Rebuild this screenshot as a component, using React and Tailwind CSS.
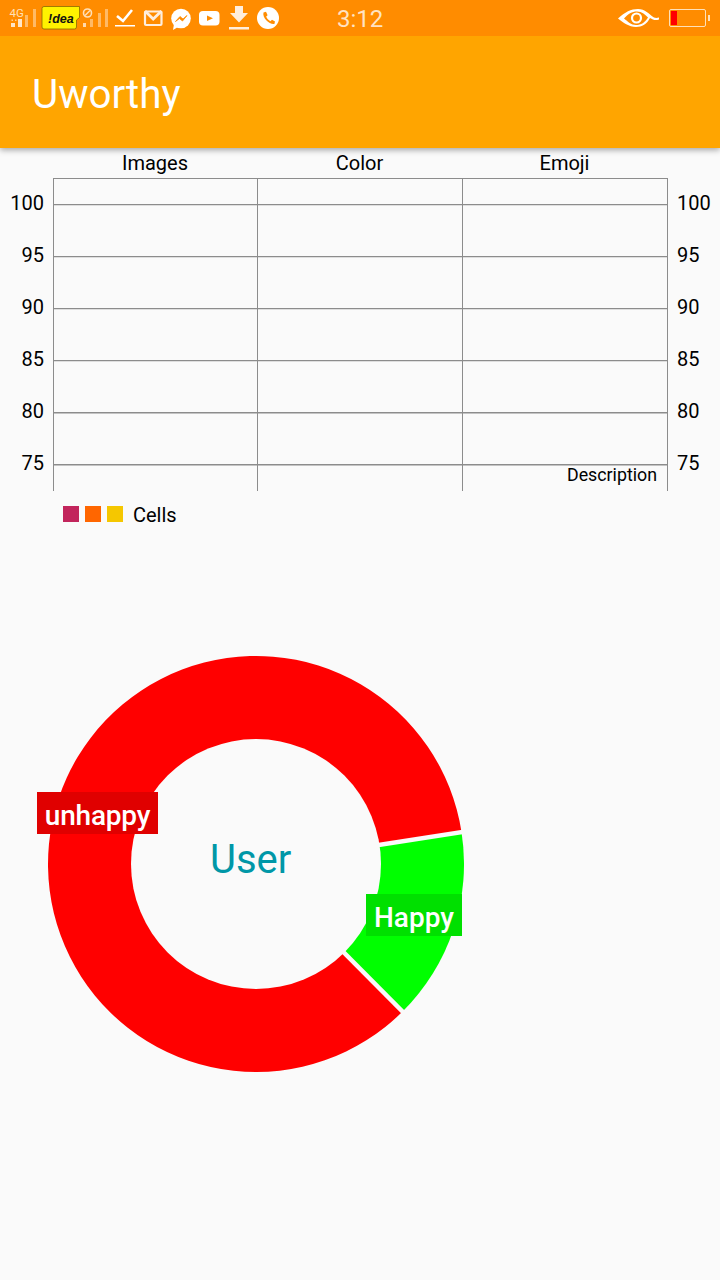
const ticks = [100, 95, 90, 85, 80, 75];

function polar(r, deg) {
  const a = (deg * Math.PI) / 180;
  return [208 + r * Math.cos(a), 208 + r * Math.sin(a)];
}

function wedge(r, from, to) {
  const [x1, y1] = polar(r, from);
  const [x2, y2] = polar(r, to);
  const large = to - from > 180 ? 1 : 0;
  return `M208 208L${x1} ${y1}A${r} ${r} 0 ${large} 1 ${x2} ${y2}Z`;
}

function StatusIcons() {
  return (
    <svg width="290" height="36" viewBox="0 0 290 36" className="shrink-0">
      <text x="9.5" y="16.5" fontSize="11.5" fill="#ffe0b8" fontFamily="Roboto, sans-serif">4G</text>
      <path d="M13 19.5L10.5 20L13 21ZM15 19.5L17.5 20L15 21Z" fill="#ffe0b8" />
      <rect x="11" y="23" width="4" height="4" fill="#ffe6c8" />
      <rect x="18" y="19" width="4" height="8" fill="#ffe6c8" />
      <rect x="25" y="15" width="3" height="12" fill="#ffffff" opacity="0.4" />
      <rect x="33" y="9" width="3" height="18" fill="#ffffff" opacity="0.4" />
      <path d="M42 8.5Q42 6.5 44 6.5H79.5V17.5L76.5 20V27Q76.5 29 74.5 29H44Q42 29 42 27Z" fill="#fff200" stroke="#8a6a00" strokeWidth="0.8" />
      <text x="48" y="23" fontSize="12.5" fontWeight="700" fontStyle="italic" fill="#111" fontFamily="Liberation Sans, sans-serif">!dea</text>
      <circle cx="87.5" cy="13" r="4" fill="none" stroke="#ffe0b8" strokeWidth="1.6" />
      <path d="M85 15.5L90 10.5" stroke="#ffe0b8" strokeWidth="1.4" />
      <rect x="83" y="23" width="3" height="4" fill="#ffd9ac" />
      <rect x="90" y="19" width="3" height="8" fill="#ffffff" opacity="0.4" />
      <rect x="98" y="13" width="3" height="14" fill="#ffffff" opacity="0.4" />
      <rect x="105" y="9" width="3" height="18" fill="#ffffff" opacity="0.4" />
      <path d="M117 16L123 21L132 10" fill="none" stroke="#fff" strokeWidth="2.6" />
      <rect x="115" y="25" width="20" height="1.5" fill="#fff" />
      <rect x="145" y="11.5" width="16.5" height="13.5" rx="1" fill="none" stroke="#ffeedd" strokeWidth="2.2" />
      <path d="M145 11L153.2 19L161.5 11" fill="none" stroke="#ffeedd" strokeWidth="2.8" />
      <circle cx="181" cy="18.5" r="9.8" fill="#fff" />
      <path d="M173 30L174 24L178 27Z" fill="#fff" />
      <path d="M175.5 21.5L180 16.5L183 19L187 15.5L182.5 21L179.5 18.5Z" fill="#ff8c00" stroke="#ff8c00" strokeWidth="0.8" />
      <rect x="199" y="11" width="20.5" height="14.5" rx="4" fill="#fff" />
      <path d="M207 15.5L213 18.2L207 21Z" fill="#ff8c00" />
      <path d="M235 6H243V13H248L239 22.5L230 13H235Z" fill="#ffeedd" />
      <rect x="229" y="27" width="20" height="2.5" fill="#ffeedd" />
      <circle cx="268" cy="18" r="11" fill="#fff" />
      <path d="M263.5 12.5L266 11.8L267.6 15.2L266.2 16.6C266.8 18.5 268.5 20.4 270.4 21.2L272 19.8L275 21.5L274.4 24C270 25 262 18 263.5 12.5Z" fill="#ff8c00" />
    </svg>
  );
}

function Eye() {
  return (
    <svg width="44" height="22" viewBox="0 0 44 22">
      <path d="M1 11.5C8 5 14 2 21 2C28 2 32 7 37 10.5C39 11.3 40.5 10.8 42 10.5V12.5C38 14 36 12.5 33 11C30 17 25 20 19 20C12 20 6 15.5 1 11.5Z" fill="#fff" />
      <path d="M7 11.5C11 7 15 4.5 20 4.5C25 4.5 28.5 8 31 10.5C28 15.5 24 18 19 18C14 18 11 14.5 7 11.5Z" fill="#ff8c00" />
      <circle cx="19.5" cy="11" r="4.5" fill="none" stroke="#fff" strokeWidth="2.2" />
    </svg>
  );
}

function Battery() {
  return (
    <div className="flex items-center">
      <div className="w-[37px] h-[18px] rounded-[2px] border border-[#ffe0b8] pl-[1px] pt-[1px]">
        <div className="w-[6px] h-[14px] bg-[#ff0000]" />
      </div>
      <div className="w-[2px] h-[6px] ml-[2px] bg-[#ffe0b8]" />
    </div>
  );
}

function Ticks({ className }) {
  return (
    <div className={`flex flex-col ${className}`}>
      {ticks.map((t) => (
        <div key={t} className="h-[52px] shrink-0 pb-[2px] flex items-center text-[20px] text-black leading-none">
          {t}
        </div>
      ))}
    </div>
  );
}

function Chart() {
  return (
    <div className="flex h-[313px]">
      <Ticks className="w-[53px] pr-[9px] items-end" />
      <div className="relative w-[615px] h-[313px]">
        <svg width="615" height="313" viewBox="0 0 615 313" className="block">
          <g stroke="#8c8c8c" strokeWidth="1" shapeRendering="crispEdges">
            <path d="M0.5 0V313M204.5 0V313M409.5 0V313M614.5 0V313" fill="none" />
            <path d="M0 0.5H615" />
          </g>
          <g stroke="#8c8c8c" strokeWidth="1.4">
            {[26.6, 78.6, 130.6, 182.6, 234.7, 286.7].map((y) => (
              <path key={y} d={`M0 ${y}H615`} />
            ))}
          </g>
        </svg>
        <span className="absolute right-[11px] top-[286px] text-[17.8px] leading-[22px] text-black">Description</span>
      </div>
      <Ticks className="pl-[9px] items-start" />
    </div>
  );
}

function Donut() {
  return (
    <div className="relative w-[416px] h-[416px] ml-[48px] mt-[134px]">
      <svg width="416" height="416" viewBox="0 0 416 416" className="block">
        <path d={wedge(208, 45.2, 351.2)} fill="#ff0000" />
        <path d={wedge(208, -8.8, 45.2)} fill="#00ff00" />
        <g stroke="#fafafa" strokeWidth="4.5">
          <path d={`M208 208L${polar(215, 45.2).join(" ")}`} />
          <path d={`M208 208L${polar(215, -8.8).join(" ")}`} />
        </g>
        <circle cx="208" cy="208" r="125" fill="#fafafa" />
      </svg>
      <span className="absolute left-[162px] top-[179px] text-[40px] leading-[50px] text-[#0097a7] whitespace-nowrap">User</span>
      <span className="absolute left-[-11px] top-[136px] w-[121px] h-[42px] pt-[6px] bg-[#e00000] flex items-center justify-center text-[28px] font-medium tracking-[-0.2px] text-white leading-none">unhappy</span>
      <span className="absolute left-[318px] top-[238px] w-[96px] h-[42px] pt-[5px] bg-[#00e000] flex items-center justify-center text-[28px] font-medium text-white leading-none">Happy</span>
    </div>
  );
}

export default function App() {
  return (
    <div className="w-[720px] h-[1280px] bg-[#fafafa] flex flex-col overflow-hidden font-['Roboto',sans-serif]">
      <div className="h-9 shrink-0 bg-[#ff8c00] flex items-center relative z-20">
        <StatusIcons />
        <span className="ml-[47px] pt-[2px] text-[24px] leading-none text-[#ffe3c2]">3:12</span>
        <div className="ml-auto mr-[10px] flex items-center gap-[8px]">
          <Eye />
          <Battery />
        </div>
      </div>
      <div className="h-[112px] shrink-0 bg-[#ffa500] flex items-center pl-8 pt-[7px] shadow-[0_2px_6px_rgba(0,0,0,0.35)] relative z-10">
        <span className="text-[40.3px] text-white leading-none">Uworthy</span>
      </div>
      <div className="h-[30px] shrink-0 pl-[53px] grid grid-cols-[204px_205px_205px] items-center text-[20px] leading-none text-black text-center">
        <span>Images</span>
        <span>Color</span>
        <span>Emoji</span>
      </div>
      <Chart />
      <div className="flex items-center h-[16px] mt-[15px] pl-[63px] gap-[6px] text-[20px] text-black">
        <div className="w-4 h-4 bg-[#c2255c]" />
        <div className="w-4 h-4 bg-[#ff6600]" />
        <div className="w-4 h-4 bg-[#f5c700]" />
        <span className="ml-[4px] pt-[2px] leading-none">Cells</span>
      </div>
      <Donut />
    </div>
  );
}
